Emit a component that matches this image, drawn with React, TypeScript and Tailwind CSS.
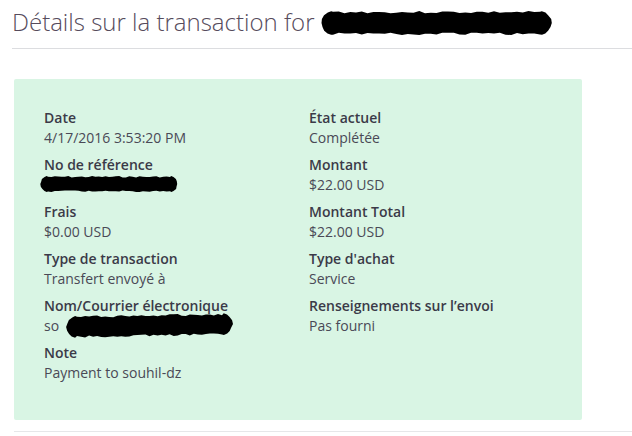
import React from 'react';

// deterministic jitter so the scribble looks hand drawn
function rng(seed: number) {
  let s = seed;
  return () => {
    s = (s * 9301 + 49297) % 233280;
    return s / 233280;
  };
}

function Scribble({ w, h, seed, tilt = 0 }: { w: number; h: number; seed: number; tilt?: number }) {
  const r = rng(seed);
  const pts: string[] = [];
  const rad = h / 2;
  const steps = 36;
  const off = (x: number) => (tilt * x) / w + (tilt < 0 ? -tilt : 0);
  const push = (x: number, y: number) => pts.push(`${x.toFixed(1)},${(y + off(x)).toFixed(1)}`);
  for (let i = 0; i <= steps; i++) {
    const x = rad + (i / steps) * (w - 2 * rad);
    push(x, r() * h * 0.1);
  }
  for (let a = -80; a <= 80; a += 20) {
    const t = (a * Math.PI) / 180;
    push(w - rad + Math.cos(t) * rad * (0.85 + r() * 0.15), rad + Math.sin(t) * rad);
  }
  for (let i = steps; i >= 0; i--) {
    const x = rad + (i / steps) * (w - 2 * rad);
    push(x, h - r() * h * 0.1);
  }
  for (let a = 100; a <= 260; a += 20) {
    const t = (a * Math.PI) / 180;
    push(rad + Math.cos(t) * rad * (0.85 + r() * 0.15), rad + Math.sin(t) * rad);
  }
  return (
    <svg width={w} height={h + Math.abs(tilt)} viewBox={`0 0 ${w} ${h + Math.abs(tilt)}`} className="inline-block align-middle">
      <polygon points={pts.join(' ')} fill="#000" />
    </svg>
  );
}

const left = [
  { label: 'Date', value: '4/17/2016 3:53:20 PM' },
  { label: 'No de référence', value: 'ref' },
  { label: 'Frais', value: '$0.00 USD' },
  { label: 'Type de transaction', value: 'Transfert envoyé à' },
  { label: 'Nom/Courrier électronique', value: 'mail' },
  { label: 'Note', value: 'Payment to souhil-dz' },
];

const right = [
  { label: 'État actuel', value: 'Complétée' },
  { label: 'Montant', value: '$22.00 USD' },
  { label: 'Montant Total', value: '$22.00 USD' },
  { label: "Type d'achat", value: 'Service' },
  { label: 'Renseignements sur l’envoi', value: 'Pas fourni' },
];

function Field({ label, value }: { label: string; value: string }) {
  let body: React.ReactNode = value;
  if (value === 'ref') {
    body = (
      <span className="relative block h-5">
        <span className="absolute left-[-4px] top-[1px] leading-none">
          <Scribble w={138} h={16} seed={7} />
        </span>
      </span>
    );
  } else if (value === 'mail') {
    body = (
      <span className="relative block h-5">
        so
        <span className="absolute left-[22px] top-[-3px] leading-none">
          <Scribble w={167} h={22} seed={31} tilt={-3} />
        </span>
      </span>
    );
  }
  return (
    <div className="mb-[7px]">
      <div className="font-semibold text-[#3b3a48] leading-5">{label}</div>
      <div className="text-[#4a4956] leading-5">{body}</div>
    </div>
  );
}

export default function App() {
  return (
    <div className="min-h-[436px] bg-white pl-3 pt-[5px] text-[14px]" style={{ fontFamily: '"Open Sans", sans-serif' }}>
      <h1 className="flex items-center font-light text-[24px] leading-[33px] text-[#564b5c]">
        <span className="whitespace-pre">Détails sur la transaction for</span>
        <span className="ml-[6px] leading-none">
          <Scribble w={231} h={24} seed={3} />
        </span>
      </h1>
      <div className="mt-[10px] border-b border-[#dcdde0]" />
      <div className="ml-[2px] mt-[30px] w-[568px] h-[341px] rounded-[2px] bg-[#d9f5e4] pl-[30px] pt-[29px]">
        <div className="grid grid-cols-[265px_1fr]">
          <div>
            {left.map(f => (
              <Field key={f.label} {...f} />
            ))}
          </div>
          <div>
            {right.map(f => (
              <Field key={f.label} {...f} />
            ))}
          </div>
        </div>
      </div>
      <div className="ml-[2px] mt-[11px] border-b border-[#e6e7e9]" />
    </div>
  );
}
